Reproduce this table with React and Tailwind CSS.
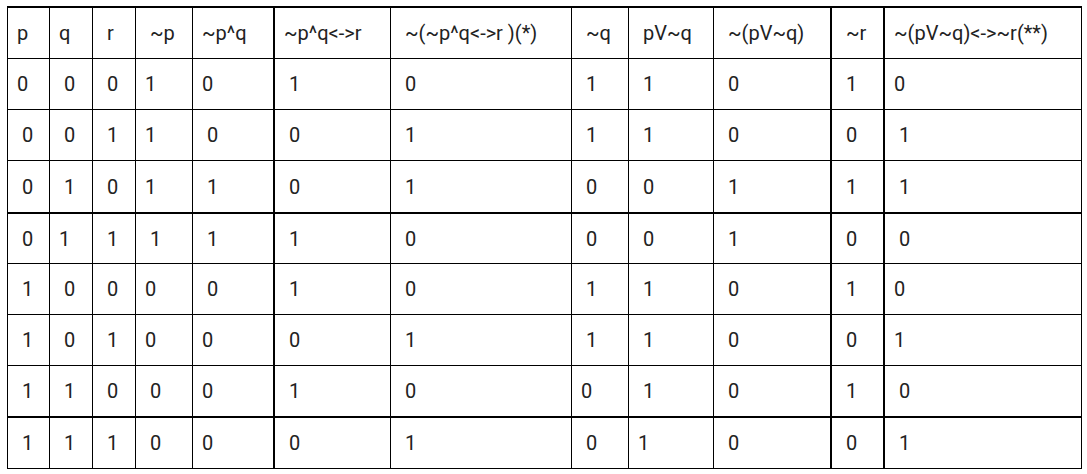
import React from 'react';

// header + 8 truth rows; a leading space is part of the cell text, as in the source doc
const header = ['p', 'q', ' r', ' ~p', '~p^q', '~p^q<->r', ' ~(~p^q<->r )(*)', ' ~q', ' pV~q', ' ~(pV~q)', ' ~r', '~(pV~q)<->~r(**)'];

const rows = [
  ['0', ' 0', ' 0', '1', '0', ' 1', ' 0', ' 1', ' 1', ' 0', ' 1', '0'],
  [' 0', ' 0', ' 1', '1', ' 0', ' 0', ' 1', ' 1', ' 1', ' 0', ' 0', ' 1'],
  [' 0', ' 1', ' 0', '1', ' 1', ' 0', ' 1', ' 0', ' 0', ' 1', ' 1', ' 1'],
  [' 0', '1', ' 1', ' 1', ' 1', ' 1', ' 0', ' 0', ' 0', ' 1', ' 0', ' 0'],
  [' 1', ' 0', ' 0', '0', ' 0', ' 1', ' 0', ' 1', ' 1', ' 0', ' 1', '0'],
  [' 1', ' 0', ' 1', '0', '0', ' 0', ' 1', ' 1', ' 1', ' 0', ' 0', '1'],
  [' 1', ' 1', ' 0', ' 0', '0', ' 1', ' 0', '0', ' 1', ' 0', ' 1', ' 0'],
  [' 1', ' 1', ' 1', ' 0', '0', ' 0', ' 1', ' 0', '1', ' 0', ' 0', ' 1'],
];

const thickCols = [5, 10, 11];
const thickRows = [0, 4, 8];

const Cell = ({ text, row, col }) => {
  const left = thickCols.includes(col) ? 'border-l-2' : 'border-l';
  const top = thickRows.includes(row) ? 'border-t-2' : 'border-t';
  return (
    <div className={`${left} ${top} border-black flex items-center pl-[9px] whitespace-pre overflow-hidden`}>
      {text}
    </div>
  );
};

export default function App() {
  const all = [header, ...rows];
  return (
    <div className="min-h-screen bg-white pl-[7px] pt-[6px]">
      <div
        className="grid w-max grid-cols-[42px_43px_43px_57px_81px_117px_181px_57px_85px_117px_53px_198px] grid-rows-[52px_51px_51px_52px_51px_51px_51px_51px_52px] border-r border-b border-black text-[20px] leading-none text-[#222]"
        style={{ fontFamily: 'Roboto, "Liberation Sans", sans-serif' }}
      >
        {all.map((r, ri) =>
          r.map((t, ci) => <Cell key={`${ri}-${ci}`} text={t} row={ri} col={ci} />)
        )}
      </div>
    </div>
  );
}
